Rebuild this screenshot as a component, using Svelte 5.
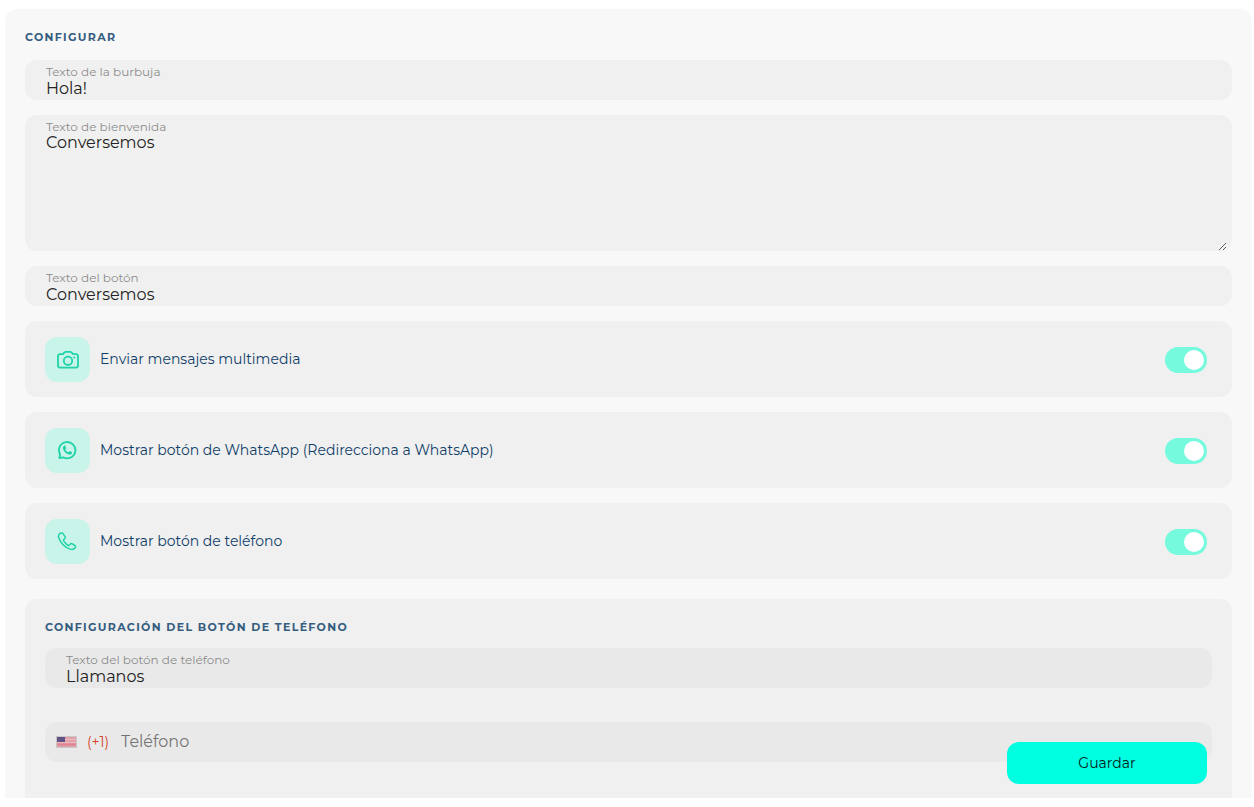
<script>
  let bubbleText = 'Hola!';
  let welcomeText = 'Conversemos';
  let buttonText = 'Conversemos';
  let phoneButtonText = 'Llamanos';
  let phone = '';

  let options = [
    { id: 'multimedia', label: 'Enviar mensajes multimedia', enabled: true },
    { id: 'whatsapp', label: 'Mostrar botón de WhatsApp (Redirecciona a WhatsApp)', enabled: true },
    { id: 'phone', label: 'Mostrar botón de teléfono', enabled: true }
  ];

  function save() {
    const settings = { bubbleText, welcomeText, buttonText, phoneButtonText, phone, options };
    localStorage.setItem('widgetSettings', JSON.stringify(settings));
  }
</script>

<form class="page" on:submit|preventDefault={save}>
  <section class="panel">
    <h2>Configurar</h2>

    <div class="stack">
      <div class="field">
        <label for="bubbleText">Texto de la burbuja</label>
        <input id="bubbleText" type="text" bind:value={bubbleText} />
      </div>
      <div class="field area">
        <label for="welcomeText">Texto de bienvenida</label>
        <textarea id="welcomeText" bind:value={welcomeText}></textarea>
      </div>
      <div class="field">
        <label for="buttonText">Texto del botón</label>
        <input id="buttonText" type="text" bind:value={buttonText} />
      </div>

      {#each options as option}
        <div class="option">
          <span class="icon">
            {#if option.id === 'multimedia'}
              <svg width="25" height="19" viewBox="-1 0 25 19">
                <path d="M4 4.200h2.300c.8 0 1.200-.4 1.600-1.200.4-.8.9-1.200 1.800-1.200h4.600c.9 0 1.400.4 1.800 1.200.4.8.8 1.200 1.600 1.200H20c1.200 0 2 .8 2 2v9.400c0 1.200-.8 2-2 2H4c-1.200 0-2-.8-2-2V6.200c0-1.200.8-2 2-2z" />
                <circle cx="12" cy="10.800" r="4.200" />
                <circle class="dot" cx="18.300" cy="7.500" r="1.100" />
              </svg>
            {:else if option.id === 'whatsapp'}
              <svg width="21" height="21" viewBox="0 0 20.500 20.500">
                <path d="M2.400 17.600l.6-3.700a8 8 0 1 1 3.200 3.100z" />
                <path class="dot" d="M6.900 5.700c.4-.4 1-.4 1.200.1l.8 1.700c.1.300 0 .6-.2.900l-.6.800c.7 1.300 1.600 2.200 2.900 2.800l.9-.8c.3-.3.6-.3.9-.2l1.600.8c.4.200.5.6.3 1-.5 1.200-1.700 1.700-2.900 1.400-3-.7-5.200-2.900-5.900-5.700-.2-1.100.2-2.100 1-2.800z" />
              </svg>
            {:else}
              <svg class="thin" width="21" height="21" viewBox="0 0 21 21">
                <path d="M3.100 2.300C1.600 3.200 1.200 4.900 1.800 6.700c1.700 5 6.300 9.700 11.400 11.400 2 .7 3.900.2 5.100-1.600.5-.8.3-1.500-.4-2l-2.600-1.700c-.8-.5-1.500-.3-2.100.4l-.8.9c-.4.500-.9.500-1.400.2-1.700-1.100-3.200-2.700-4.300-4.400-.3-.5-.3-1 .1-1.400l.9-.8c.6-.6.8-1.200.3-2L6.200 2.800c-.5-.8-1.300-1.300-3.100-.5z" />
              </svg>
            {/if}
          </span>
          <label for={option.id}>{option.label}</label>
          <input class="switch" id={option.id} type="checkbox" bind:checked={option.enabled} />
        </div>
      {/each}
    </div>

    <section class="subpanel">
      <h2>Configuración del botón de teléfono</h2>
      <div class="field">
        <label for="phoneButtonText">Texto del botón de teléfono</label>
        <input id="phoneButtonText" type="text" bind:value={phoneButtonText} />
      </div>
      <div class="phone">
        <button class="country" type="button" aria-label="Estados Unidos (+1)">
          <svg width="22" height="12" viewBox="0 0 22 12">
            <rect width="21" height="12" fill="#c8c8c8" />
            <rect x="1" y="1" width="19" height="10" fill="#e9bcc0" />
            <path d="M1 2h19M1 5h19M1 8h19M1 10h19" stroke="#dc8490" stroke-width="1" />
            <path d="M1 8.500h19" stroke="#dc8490" stroke-width="2" />
            <rect x="1" y="1" width="8" height="5" fill="#615286" />
          </svg>
          <span>(+1)</span>
        </button>
        <input type="tel" aria-label="Teléfono" placeholder="Teléfono" bind:value={phone} />
      </div>
    </section>
  </section>

  <button class="save" type="submit">Guardar</button>
</form>

<style>
  :global(body) {
    background: #fff;
  }

  .page {
    height: 100vh;
    box-sizing: border-box;
    padding: 9px 2px 9px 5px;
    font-family: Montserrat, Inter, sans-serif;
  }

  .panel {
    height: 100%;
    box-sizing: border-box;
    padding: 20px;
    overflow: hidden;
    background: #f8f8f8;
    border-radius: 12px 12px 0 0;
  }

  h2 {
    margin: 0 0 15px;
    color: #355d80;
    font-size: 11px;
    font-weight: 700;
    line-height: 16px;
    letter-spacing: 0.12em;
    text-transform: uppercase;
  }

  .stack {
    display: flex;
    flex-direction: column;
    gap: 15px;
  }

  .field {
    display: flex;
    flex-direction: column;
    height: 40px;
    box-sizing: border-box;
    padding: 4px 21px;
    background: #f0f0f0;
    border-radius: 12px;
  }

  .field label {
    color: #8c8c8c;
    font-size: 12px;
    line-height: 16px;
  }

  input,
  textarea,
  button {
    margin: 0;
    padding: 0;
    border: 0;
    outline: 0;
    background: transparent;
    font-family: inherit;
  }

  .field input,
  textarea {
    color: #222;
    font-size: 16px;
    line-height: 16px;
  }

  .field input {
    height: 16px;
  }

  .area {
    height: auto;
    padding: 4px 5px 0 21px;
  }

  textarea {
    height: 116px;
    resize: vertical;
  }

  .option {
    display: flex;
    align-items: center;
    gap: 10px;
    padding: 16px 25px 15px 20px;
    background: #f0f0f0;
    border-radius: 12px;
  }

  .option label {
    flex: 1;
    color: #0f3e68;
    font-size: 14px;
    line-height: 17px;
  }

  .icon {
    display: flex;
    align-items: center;
    justify-content: center;
    width: 45px;
    height: 45px;
    background: #c9f4e9;
    border-radius: 12px;
  }

  .icon svg {
    fill: none;
    stroke: #20d3a8;
    stroke-width: 1.8;
    stroke-linejoin: round;
  }

  .icon .thin {
    stroke-width: 1.5;
  }

  .icon .dot {
    fill: #20d3a8;
    stroke: none;
  }

  .switch {
    display: flex;
    align-items: center;
    justify-content: flex-end;
    width: 42px;
    height: 26px;
    box-sizing: border-box;
    padding: 3px;
    appearance: none;
    background: #75fadd;
    border-radius: 13px;
    cursor: pointer;
  }

  .switch::before {
    content: '';
    width: 20px;
    height: 20px;
    background: #fff;
    border-radius: 50%;
  }

  .switch:not(:checked) {
    justify-content: flex-start;
    background: #ccc;
  }

  .subpanel {
    margin-top: 20px;
    padding: 20px 20px 46px;
    background: #f0f0f0;
    border-radius: 12px;
  }

  .subpanel h2 {
    margin-bottom: 13px;
  }

  .subpanel .field,
  .phone {
    background: #e9e9e9;
  }

  .phone {
    display: flex;
    align-items: center;
    gap: 12px;
    height: 40px;
    margin-top: 34px;
    padding: 0 11px;
    border-radius: 12px;
  }

  .country {
    display: flex;
    align-items: center;
    gap: 9px;
    color: #d6452b;
    font-size: 14px;
    line-height: 20px;
    cursor: pointer;
  }

  .phone input {
    flex: 1;
    height: 20px;
    font-size: 16px;
    line-height: 20px;
  }

  .phone input::placeholder {
    color: #757575;
  }

  .save {
    position: fixed;
    right: 47px;
    bottom: 23px;
    width: 200px;
    height: 42px;
    background: #00ffe1;
    border-radius: 12px;
    color: #06201c;
    font-size: 14px;
    cursor: pointer;
  }
</style>
